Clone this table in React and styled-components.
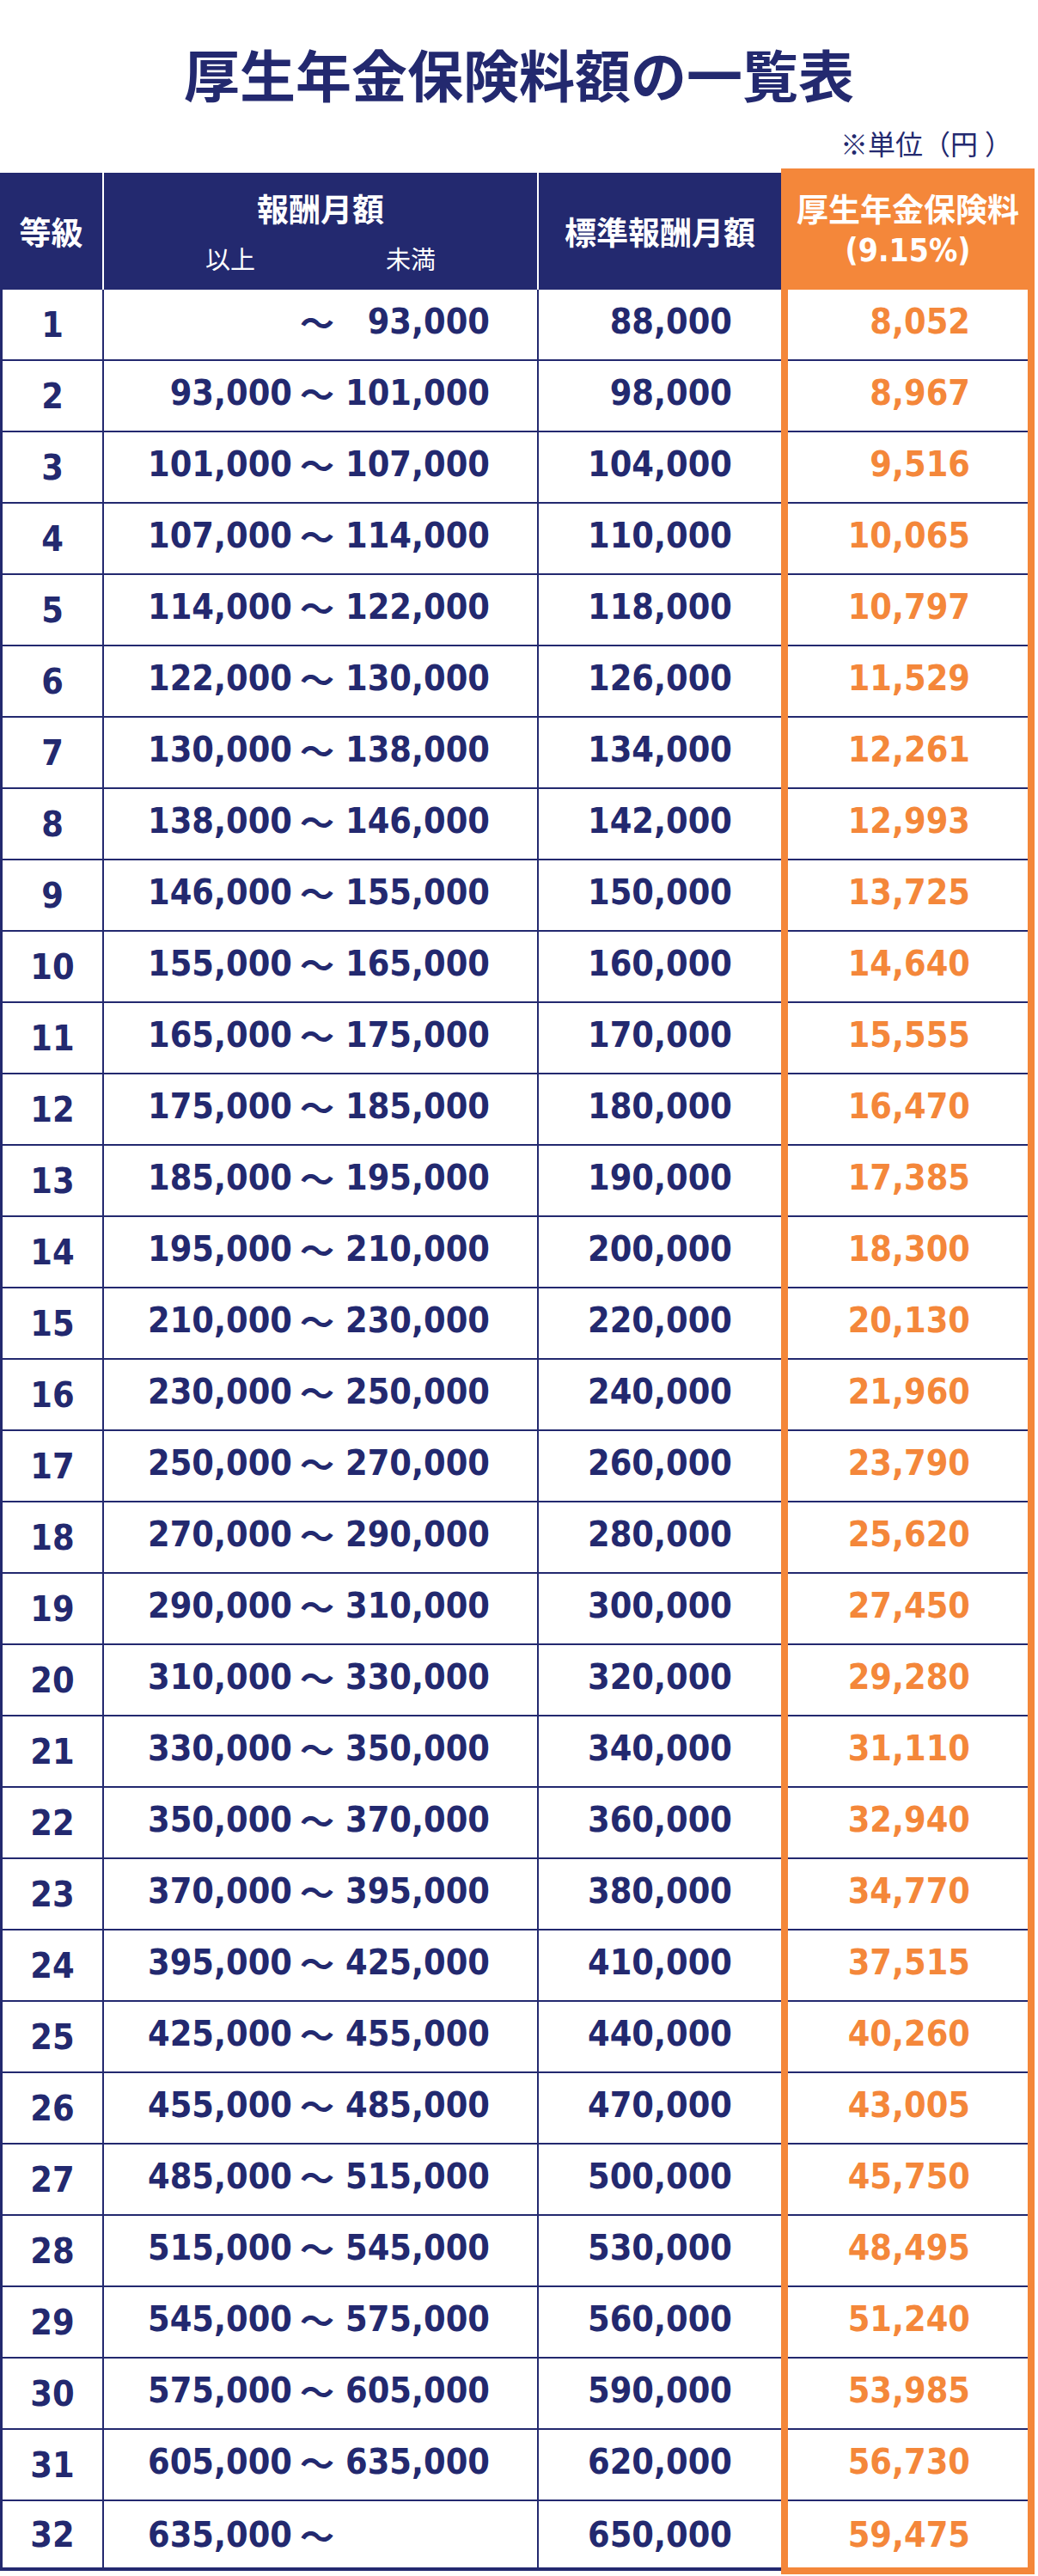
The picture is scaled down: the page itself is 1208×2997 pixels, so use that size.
import React from 'react';
import styled, { createGlobalStyle } from 'styled-components';

const NAVY = '#23296f';
const ORANGE = '#f4873a';
const CJK = '"Noto Sans CJK JP", "Noto Sans", sans-serif';
const NUM = '"DejaVu Sans Condensed", "DejaVu Sans", "Noto Sans CJK JP", sans-serif';
const COLS = '121px 506px 282px 295px';

const GlobalStyle = createGlobalStyle`
  html, body { margin: 0; padding: 0; background: #fff; }
  #root { width: 1208px; }
`;

const Page = styled.div`
  width: 1208px;
  display: flex;
  flex-direction: column;
`;

const Title = styled.h1`
  margin: 53px 0 0;
  font-family: ${CJK};
  font-weight: 700;
  font-size: 65px;
  line-height: 65px;
  color: ${NAVY};
  text-align: center;
`;

const Unit = styled.p`
  margin: 32px 0 0;
  align-self: flex-end;
  padding-right: 30px;
  font-family: ${CJK};
  font-weight: 400;
  font-size: 32px;
  line-height: 33px;
  color: ${NAVY};
  white-space: nowrap;
`;

const Paren = styled.span`
  margin-left: ${p => (p.$open ? 0 : 8)}px;
`;

const Table = styled.div`
  margin-top: 13px;
  width: 1204px;
  display: flex;
  flex-direction: column;
`;

const HeadRow = styled.div`
  display: grid;
  grid-template-columns: ${COLS};
  align-items: end;
`;

const HeadCell = styled.div`
  box-sizing: border-box;
  height: 136px;
  background: ${NAVY};
  color: #fff;
  display: flex;
  flex-direction: column;
  align-items: center;
  justify-content: center;
  border-right: ${p => (p.$sep ? '2px solid #fff' : 'none')};
  font-family: ${CJK};
  font-weight: 700;
  font-size: 37px;
  line-height: 37px;
`;

const HeadOrange = styled(HeadCell)`
  height: 141px;
  background: ${ORANGE};
  gap: 12px;
`;

const HeadMain = styled.span`
  display: block;
`;

const HeadRate = styled.span`
  display: block;
  font-family: ${NUM};
  font-stretch: condensed;
`;

const SubLabels = styled.div`
  display: flex;
  justify-content: center;
  gap: 152px;
  margin-top: 25px;
  font-weight: 400;
  font-size: 29px;
  line-height: 29px;
`;

const Row = styled.div`
  display: grid;
  grid-template-columns: ${COLS};
  align-items: start;
`;

const BodyCell = styled.div`
  box-sizing: border-box;
  height: ${p => (p.$last ? 81 : 83)}px;
  border-bottom: ${p => (p.$last ? 4 : 2)}px solid ${NAVY};
  display: flex;
  align-items: center;
  font-family: ${NUM};
  font-stretch: condensed;
  font-weight: 700;
  font-size: 41px;
  color: ${NAVY};
  white-space: nowrap;
`;

const GradeCell = styled(BodyCell)`
  border-left: 3px solid ${NAVY};
  border-right: 2px solid ${NAVY};
  justify-content: center;
`;

const RangeCell = styled(BodyCell)`
  border-right: 2px solid ${NAVY};
  display: grid;
  grid-template-columns: 219px 58px 172px;
  align-items: center;
  padding-bottom: ${p => (p.$last ? 0 : 7)}px;
`;

const RangeNum = styled.span`
  text-align: right;
`;

const Tilde = styled.span`
  text-align: center;
  font-family: ${CJK};
  font-weight: 700;
  font-size: 40px;
`;

const StdCell = styled(BodyCell)`
  justify-content: flex-end;
  padding-right: 57px;
  padding-bottom: ${p => (p.$last ? 0 : 7)}px;
`;

const PremiumCell = styled.div`
  box-sizing: border-box;
  height: ${p => (p.$last ? 85 : 83)}px;
  border-left: 8px solid ${ORANGE};
  border-right: 8px solid ${ORANGE};
  border-bottom: ${p => (p.$last ? `8px solid ${ORANGE}` : 'none')};
`;

const PremiumInner = styled.div`
  box-sizing: border-box;
  height: 100%;
  border-bottom: ${p => (p.$last ? 'none' : `2px solid ${NAVY}`)};
  display: flex;
  align-items: center;
  justify-content: flex-end;
  padding-right: 67px;
  padding-bottom: ${p => (p.$last ? 0 : 7)}px;
  font-family: ${NUM};
  font-stretch: condensed;
  font-weight: 700;
  font-size: 41px;
  color: ${ORANGE};
`;

const rows = [
  [1, '', '93,000', '88,000', '8,052'],
  [2, '93,000', '101,000', '98,000', '8,967'],
  [3, '101,000', '107,000', '104,000', '9,516'],
  [4, '107,000', '114,000', '110,000', '10,065'],
  [5, '114,000', '122,000', '118,000', '10,797'],
  [6, '122,000', '130,000', '126,000', '11,529'],
  [7, '130,000', '138,000', '134,000', '12,261'],
  [8, '138,000', '146,000', '142,000', '12,993'],
  [9, '146,000', '155,000', '150,000', '13,725'],
  [10, '155,000', '165,000', '160,000', '14,640'],
  [11, '165,000', '175,000', '170,000', '15,555'],
  [12, '175,000', '185,000', '180,000', '16,470'],
  [13, '185,000', '195,000', '190,000', '17,385'],
  [14, '195,000', '210,000', '200,000', '18,300'],
  [15, '210,000', '230,000', '220,000', '20,130'],
  [16, '230,000', '250,000', '240,000', '21,960'],
  [17, '250,000', '270,000', '260,000', '23,790'],
  [18, '270,000', '290,000', '280,000', '25,620'],
  [19, '290,000', '310,000', '300,000', '27,450'],
  [20, '310,000', '330,000', '320,000', '29,280'],
  [21, '330,000', '350,000', '340,000', '31,110'],
  [22, '350,000', '370,000', '360,000', '32,940'],
  [23, '370,000', '395,000', '380,000', '34,770'],
  [24, '395,000', '425,000', '410,000', '37,515'],
  [25, '425,000', '455,000', '440,000', '40,260'],
  [26, '455,000', '485,000', '470,000', '43,005'],
  [27, '485,000', '515,000', '500,000', '45,750'],
  [28, '515,000', '545,000', '530,000', '48,495'],
  [29, '545,000', '575,000', '560,000', '51,240'],
  [30, '575,000', '605,000', '590,000', '53,985'],
  [31, '605,000', '635,000', '620,000', '56,730'],
  [32, '635,000', '', '650,000', '59,475'],
];

export default function App() {
  return (
    <Page>
      <GlobalStyle />
      <Title>厚生年金保険料額の一覧表</Title>
      <Unit>
        ※単位<Paren $open>（</Paren>円<Paren>）</Paren>
      </Unit>
      <Table>
        <HeadRow>
          <HeadCell $sep>等級</HeadCell>
          <HeadCell $sep>
            <HeadMain>報酬月額</HeadMain>
            <SubLabels>
              <span>以上</span>
              <span>未満</span>
            </SubLabels>
          </HeadCell>
          <HeadCell>標準報酬月額</HeadCell>
          <HeadOrange>
            <HeadMain>厚生年金保険料</HeadMain>
            <HeadRate>(9.15%)</HeadRate>
          </HeadOrange>
        </HeadRow>
        {rows.map(([g, from, to, std, prem], i) => {
          const last = i === rows.length - 1;
          return (
            <Row key={g}>
              <GradeCell $last={last}>{g}</GradeCell>
              <RangeCell $last={last}>
                <RangeNum>{from}</RangeNum>
                <Tilde>～</Tilde>
                <RangeNum>{to}</RangeNum>
              </RangeCell>
              <StdCell $last={last}>{std}</StdCell>
              <PremiumCell $last={last}>
                <PremiumInner $last={last}>{prem}</PremiumInner>
              </PremiumCell>
            </Row>
          );
        })}
      </Table>
    </Page>
  );
}
